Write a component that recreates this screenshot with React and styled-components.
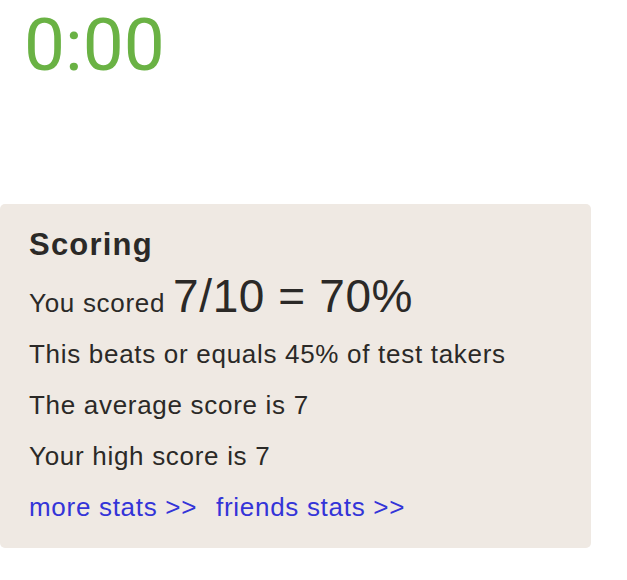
import React from 'react';
import styled, { createGlobalStyle } from 'styled-components';

const GlobalStyle = createGlobalStyle`
  body {
    margin: 0;
    background: #fff;
    font-family: "Liberation Sans", Arial, sans-serif;
  }
`;

const Page = styled.div`
  width: 627px;
`;

const Timer = styled.div`
  font-family: Roboto, sans-serif;
  font-size: 73px;
  line-height: 86px;
  color: #6ab244;
  margin-top: 2px;
  padding-left: 24px;
`;

const Panel = styled.div`
  margin-top: 116px;
  width: 591px;
  box-sizing: border-box;
  background: #efe9e3;
  border-radius: 5px;
  padding: 23px 29px 15px;
  color: #2b2927;
`;

const Heading = styled.h2`
  margin: 0 0 15px;
  font-size: 31px;
  line-height: 36px;
  font-weight: bold;
  letter-spacing: 1.2px;
`;

const Row = styled.div`
  font-size: 26px;
  line-height: 51px;
  letter-spacing: 0.7px;
`;

const Big = styled.span`
  font-size: 46px;
  line-height: 0;
  letter-spacing: 0.6px;
`;

const Link = styled.a`
  color: #3434d8;
  text-decoration: none;
  margin-right: 19px;
`;

const App = () => (
  <Page>
    <GlobalStyle />
    <Timer>0:00</Timer>
    <Panel>
      <Heading>Scoring</Heading>
      <Row>
        You scored <Big>7/10 = 70%</Big>
      </Row>
      <Row>This beats or equals 45% of test takers</Row>
      <Row>The average score is 7</Row>
      <Row>Your high score is 7</Row>
      <Row>
        <Link href="#">more stats &gt;&gt;</Link>
        <Link href="#">friends stats &gt;&gt;</Link>
      </Row>
    </Panel>
  </Page>
);

export default App;
